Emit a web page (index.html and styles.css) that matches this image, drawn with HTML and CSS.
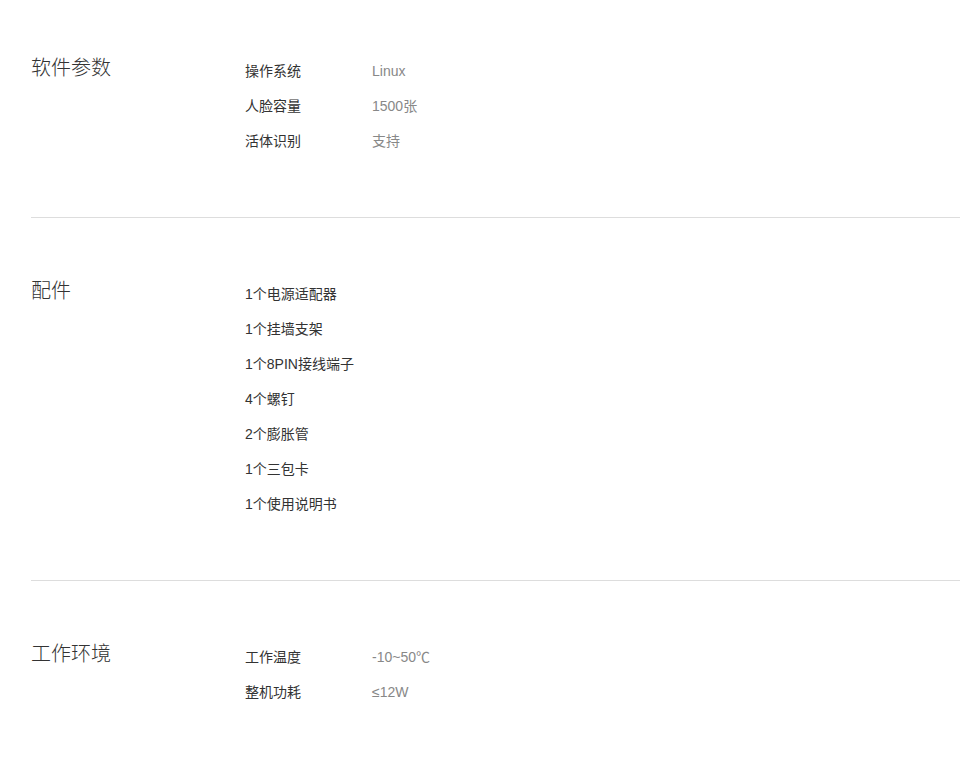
FILE: index.html
```html
<!DOCTYPE html>
<html lang="zh-CN">
<head>
  <meta charset="UTF-8" />
  <meta name="viewport" content="width=device-width, initial-scale=1.0"/>
  <title>产品参数</title>
  <link rel="stylesheet" href="styles.css">
</head>
<body>
  <div class="spec-page">
    <div class="spec-section first">
      <h3 class="spec-title">软件参数</h3>
      <ul class="spec-list">
        <li><span class="spec-label">操作系统</span><span class="spec-value">Linux</span></li>
        <li><span class="spec-label">人脸容量</span><span class="spec-value">1500张</span></li>
        <li><span class="spec-label">活体识别</span><span class="spec-value">支持</span></li>
      </ul>
    </div>

    <div class="spec-section">
      <h3 class="spec-title">配件</h3>
      <ul class="spec-list">
        <li>1个电源适配器</li>
        <li>1个挂墙支架</li>
        <li>1个8PIN接线端子</li>
        <li>4个螺钉</li>
        <li>2个膨胀管</li>
        <li>1个三包卡</li>
        <li>1个使用说明书</li>
      </ul>
    </div>

    <div class="spec-section last">
      <h3 class="spec-title">工作环境</h3>
      <ul class="spec-list">
        <li><span class="spec-label">工作温度</span><span class="spec-value">-10~50℃</span></li>
        <li><span class="spec-label">整机功耗</span><span class="spec-value">≤12W</span></li>
      </ul>
    </div>
  </div>
</body>
</html>
```

FILE: styles.css
```css
body {
  margin: 0;
  padding: 0;
  background: #fff;
  font-family: Arial, "Liberation Sans", "Noto Sans CJK SC", sans-serif;
  color: #333;
}

.spec-page {
  padding-left: 31px;
}

.spec-section {
  display: flex;
  padding: 59px 0 58px;
  border-bottom: 1px solid #ddd;
}

.spec-section.first {
  padding-top: 54px;
}

.spec-section.last {
  border-bottom: none;
}

.spec-title {
  width: 214px;
  margin: 4px 0 0;
  font-size: 20px;
  font-weight: 300;
  line-height: 20px;
  color: #333;
}

.spec-list {
  list-style: none;
  margin: 0;
  padding: 0;
}

.spec-list li {
  display: flex;
  height: 35px;
  line-height: 35px;
  font-size: 14px;
  color: #333;
}

.spec-label {
  width: 127px;
}

.spec-value {
  color: #888;
}
```
